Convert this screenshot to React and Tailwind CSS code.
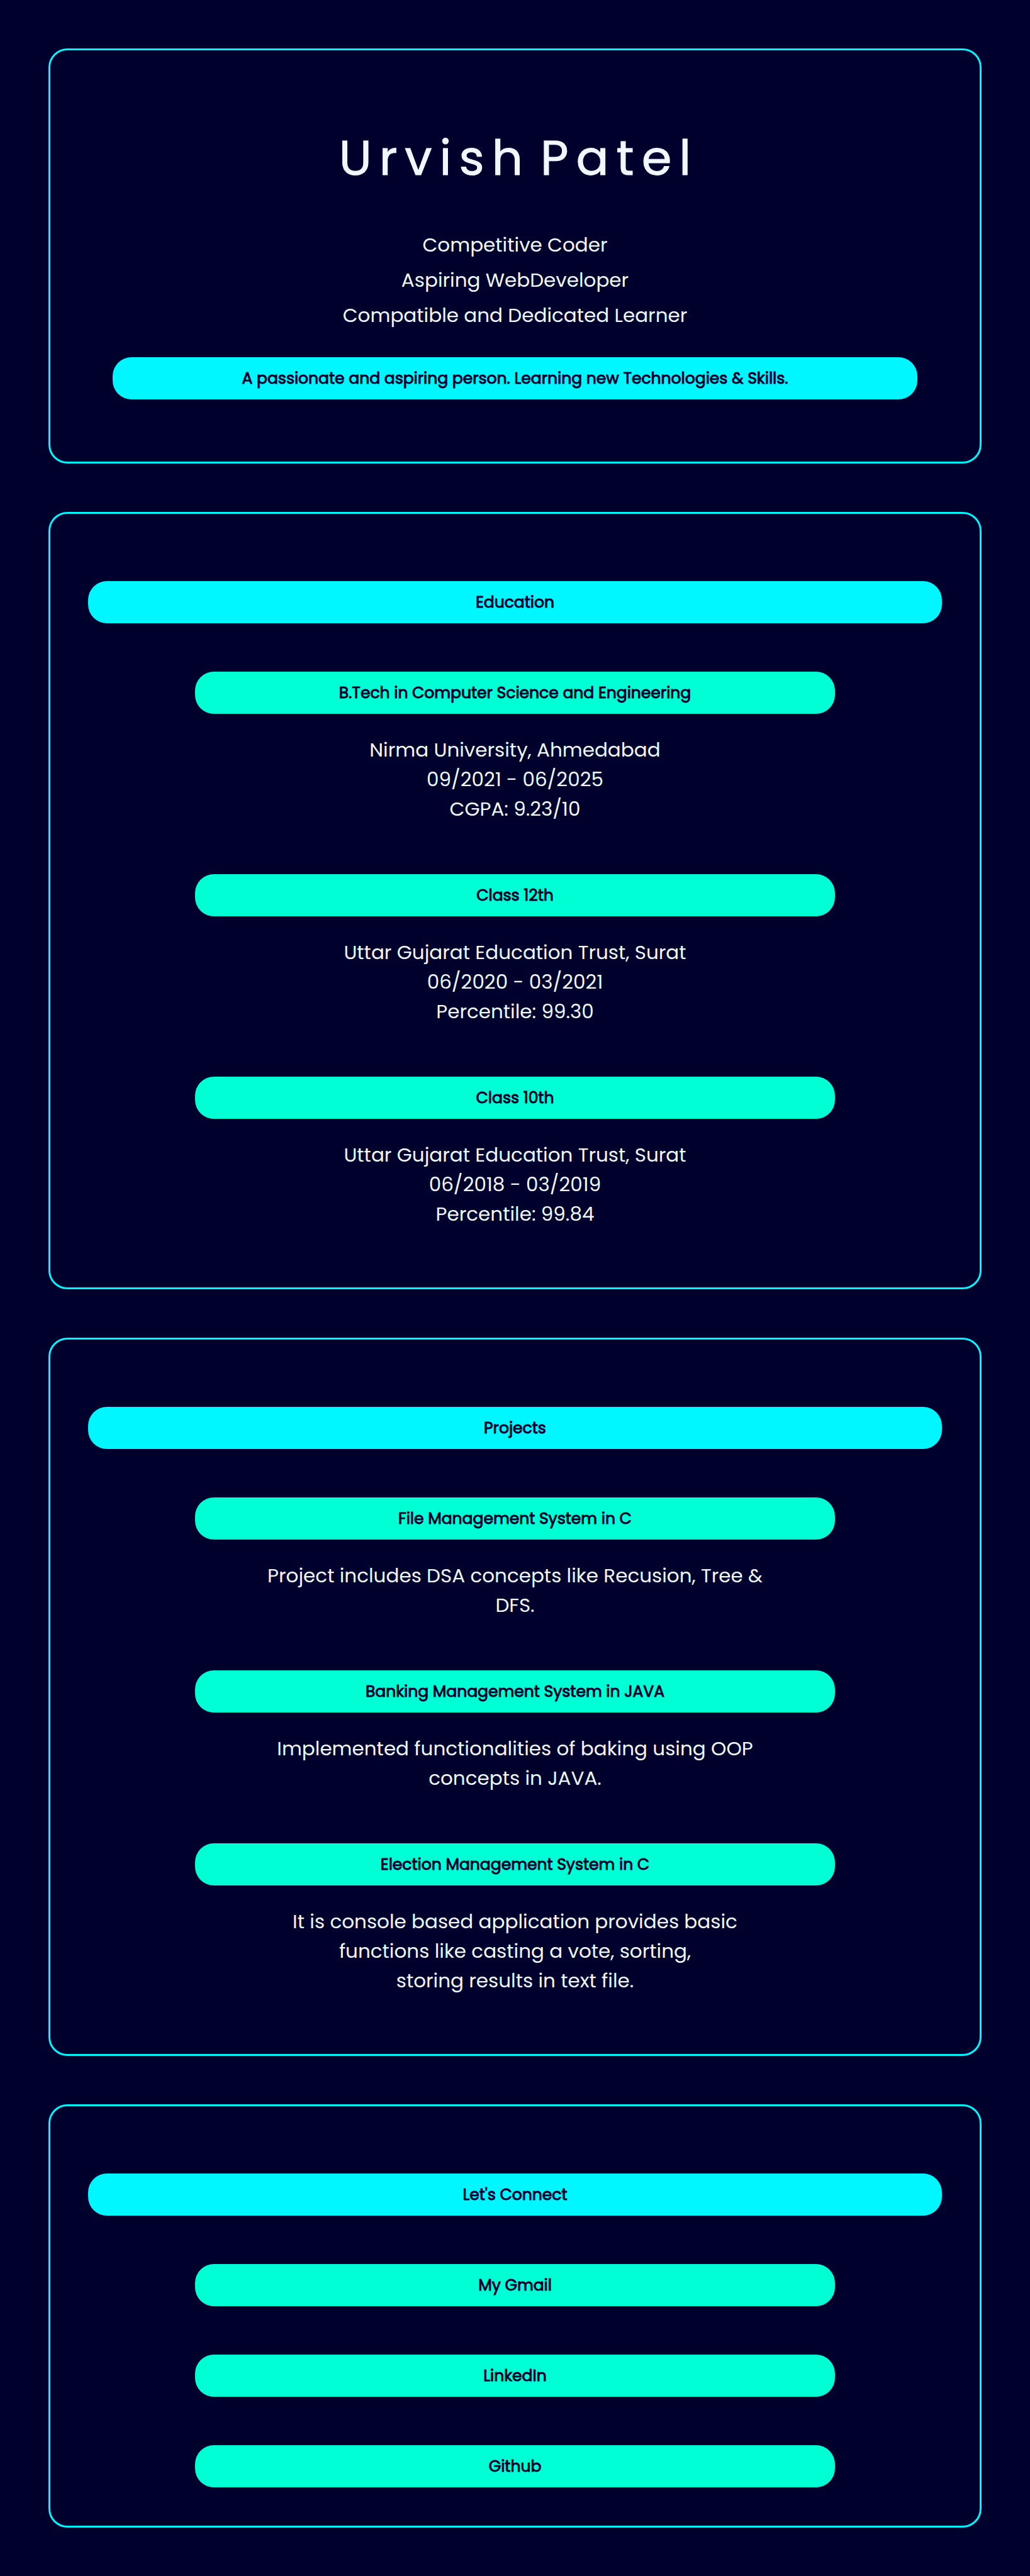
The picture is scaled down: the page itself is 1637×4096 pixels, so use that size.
const education = [
  {
    title: "B.Tech in Computer Science and Engineering",
    lines: ["Nirma University, Ahmedabad", "09/2021 - 06/2025", "CGPA: 9.23/10"],
  },
  {
    title: "Class 12th",
    lines: ["Uttar Gujarat Education Trust, Surat", "06/2020 - 03/2021", "Percentile: 99.30"],
  },
  {
    title: "Class 10th",
    lines: ["Uttar Gujarat Education Trust, Surat", "06/2018 - 03/2019", "Percentile: 99.84"],
  },
];

const projects = [
  {
    title: "File Management System in C",
    lines: ["Project includes DSA concepts like Recusion, Tree &", "DFS."],
  },
  {
    title: "Banking Management System in JAVA",
    lines: ["Implemented functionalities of baking using OOP", "concepts in JAVA."],
  },
  {
    title: "Election Management System in C",
    lines: [
      "It is console based application provides basic",
      "functions like casting a vote, sorting,",
      "storing results in text file.",
    ],
  },
];

const links = [
  { label: "My Gmail", href: "#gmail" },
  { label: "LinkedIn", href: "#linkedin" },
  { label: "Github", href: "#github" },
];

const pill =
  "rounded-[30px] py-4 text-[25px] leading-[35px] text-[#00002c] [-webkit-text-stroke:1px_#00002c]";

function Card({ children, className = "" }) {
  return (
    <section className={`rounded-[30px] border-3 border-[#00f7ff] ${className}`}>{children}</section>
  );
}

function SectionTitle({ children }) {
  return <h2 className={`${pill} bg-[#00f7ff]`}>{children}</h2>;
}

function Entry({ title, lines }) {
  return (
    <article className="mx-auto w-3/4">
      <h3 className={`${pill} bg-[#00ffd5]`}>{title}</h3>
      <p className="mt-[34px] text-[31px] leading-[47px]">
        {lines.map((line) => (
          <span key={line} className="block">
            {line}
          </span>
        ))}
      </p>
    </article>
  );
}

function EntrySection({ title, entries }) {
  return (
    <Card className="px-15 pt-[107px] pb-[93px]">
      <SectionTitle>{title}</SectionTitle>
      <div className="mt-[77px] flex flex-col gap-20">
        {entries.map((entry) => (
          <Entry key={entry.title} {...entry} />
        ))}
      </div>
    </Card>
  );
}

export default function App() {
  return (
    <main className="flex min-h-screen flex-col gap-[77px] bg-[#00002c] p-[77px] text-center font-['Poppins','Inter',sans-serif] text-[#f0f8ff]">
      <Card className="px-[99px] pt-[111px] pb-[99px]">
        <h1 className="flex flex-wrap justify-center gap-x-4 pl-3 text-[77px] leading-[120px] tracking-[12px] [-webkit-text-stroke:1px_#f0f8ff]">
          <span>Urvish</span> <span>Patel</span>
        </h1>
        <div className="mt-[50px] text-[31px] leading-[56px]">
          <p>Competitive Coder</p>
          <p>Aspiring WebDeveloper</p>
          <p>Compatible and Dedicated Learner</p>
        </div>
        <p className={`${pill} mt-[39px] bg-[#00f7ff]`}>
          A passionate and aspiring person. Learning new Technologies &amp; Skills.
        </p>
      </Card>

      <EntrySection title="Education" entries={education} />
      <EntrySection title="Projects" entries={projects} />

      <Card className="px-15 pt-[107px] pb-[61px]">
        <SectionTitle>Let's Connect</SectionTitle>
        <nav className="mx-auto mt-[77px] flex w-3/4 flex-col gap-[77px]">
          {links.map(({ label, href }) => (
            <a key={label} href={href} className={`${pill} bg-[#00ffd5]`}>
              {label}
            </a>
          ))}
        </nav>
      </Card>
    </main>
  );
}
